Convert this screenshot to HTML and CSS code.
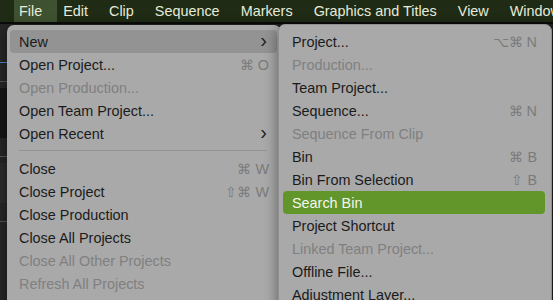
FILE: index.html
```html
<!DOCTYPE html>
<html>
<head>
<meta charset="utf-8">
<link rel="stylesheet" href="styles.css">
</head>
<body>
<div class="menubar">
  <span class="mb-item active">File</span>
  <span class="mb-item">Edit</span>
  <span class="mb-item">Clip</span>
  <span class="mb-item">Sequence</span>
  <span class="mb-item">Markers</span>
  <span class="mb-item">Graphics and Titles</span>
  <span class="mb-item">View</span>
  <span class="mb-item">Window</span>
</div>
<div class="workspace">
  <div class="app-strip">
    <div class="line blue"></div>
    <div class="line"></div>
    <div class="block dark"></div>
    <div class="line"></div>
    <div class="block"></div>
    <div class="line"></div>
  </div>

  <div class="menu file-menu">
    <div class="item hl"><span class="label">New</span><span class="chev">›</span></div>
    <div class="item"><span class="label">Open Project...</span><span class="key">⌘ O</span></div>
    <div class="item dis"><span class="label">Open Production...</span></div>
    <div class="item"><span class="label">Open Team Project...</span></div>
    <div class="item"><span class="label">Open Recent</span><span class="chev">›</span></div>
    <div class="sep"></div>
    <div class="item"><span class="label">Close</span><span class="key">⌘ W</span></div>
    <div class="item"><span class="label">Close Project</span><span class="key">⇧⌘ W</span></div>
    <div class="item"><span class="label">Close Production</span></div>
    <div class="item"><span class="label">Close All Projects</span></div>
    <div class="item dis"><span class="label">Close All Other Projects</span></div>
    <div class="item dis"><span class="label">Refresh All Projects</span></div>
  </div>

  <div class="menu sub-menu">
    <div class="item"><span class="label">Project...</span><span class="key">⌥⌘ N</span></div>
    <div class="item dis"><span class="label">Production...</span></div>
    <div class="item"><span class="label">Team Project...</span></div>
    <div class="item"><span class="label">Sequence...</span><span class="key">⌘ N</span></div>
    <div class="item dis"><span class="label">Sequence From Clip</span></div>
    <div class="item"><span class="label">Bin</span><span class="key">⌘ B</span></div>
    <div class="item"><span class="label">Bin From Selection</span><span class="key">⇧ B</span></div>
    <div class="item sel"><span class="label">Search Bin</span></div>
    <div class="item"><span class="label">Project Shortcut</span></div>
    <div class="item dis"><span class="label">Linked Team Project...</span></div>
    <div class="item"><span class="label">Offline File...</span></div>
    <div class="item"><span class="label">Adjustment Layer...</span></div>
  </div>
</div>
</body>
</html>
```

FILE: styles.css
```css
* { box-sizing: border-box; }
html, body {
  margin: 0;
  padding: 0;
  width: 553px;
  height: 300px;
  overflow: hidden;
  background: #1c1c1c;
  font-family: "Liberation Sans", Arial, sans-serif;
}
.menubar {
  height: 24px;
  background: #1f2b15;
  display: flex;
  align-items: flex-start;
  padding-left: 14px;
  border-bottom: 2px solid #0b0b0b;
  overflow: hidden;
}
.mb-item {
  color: #e6ecd9;
  font-size: 14.4px;
  padding: 0 11px 0 10px;
  height: 22px;
  line-height: 22px;
  white-space: nowrap;
}
.mb-item.active {
  background: #3e5130;
  padding: 0 15px 0 5px;
  margin-right: -4px;
}
.workspace {
  position: relative;
  height: 276px;
  background: #202020;
}
.app-strip {
  width: 12px;
  height: 100%;
  display: flex;
  flex-direction: column;
  background: #262626;
}
.app-strip .line { height: 1px; background: #555; margin-top: 18px; }
.app-strip .line.blue { background: #4a7fc4; margin-top: 38px; }
.app-strip .block { height: 40px; background: #2c2c2c; margin-top: 6px; }
.app-strip .block.dark { background: #151515; height: 50px; }

.menu {
  position: absolute;
  background: #a9a9a9;
  border-radius: 7px;
  box-shadow: 0 4px 14px rgba(0,0,0,0.45);
  overflow: hidden;
}
.file-menu {
  left: 7px;
  top: 1px;
  width: 274px;
  height: 290px;
  z-index: 1;
  padding: 5px 4px 0 3px;
}
.sub-menu {
  left: 278px;
  top: 0px;
  width: 274px;
  height: 290px;
  z-index: 2;
  padding: 5px 6px 0 4px;
  border: 1px solid #8f8f8f;
}
.item {
  height: 23px;
  display: flex;
  align-items: center;
  justify-content: space-between;
  padding: 0 8px 0 9px;
  font-size: 14.4px;
  color: #1b1b1b;
  border-radius: 4px;
  white-space: nowrap;
}
.item.hl { background: #939393; }
.item.sel { background: #62962a; color: #f4f7ee; }
.item.dis { color: #808080; }
.key { color: #7b7b7b; font-size: 14.4px; }
.chev { font-size: 20px; line-height: 20px; color: #222; margin-top: -3px; margin-right: 2px; }
.sep {
  height: 1px;
  background: #939393;
  margin: 5px 10px 6px 9px;
}
```
